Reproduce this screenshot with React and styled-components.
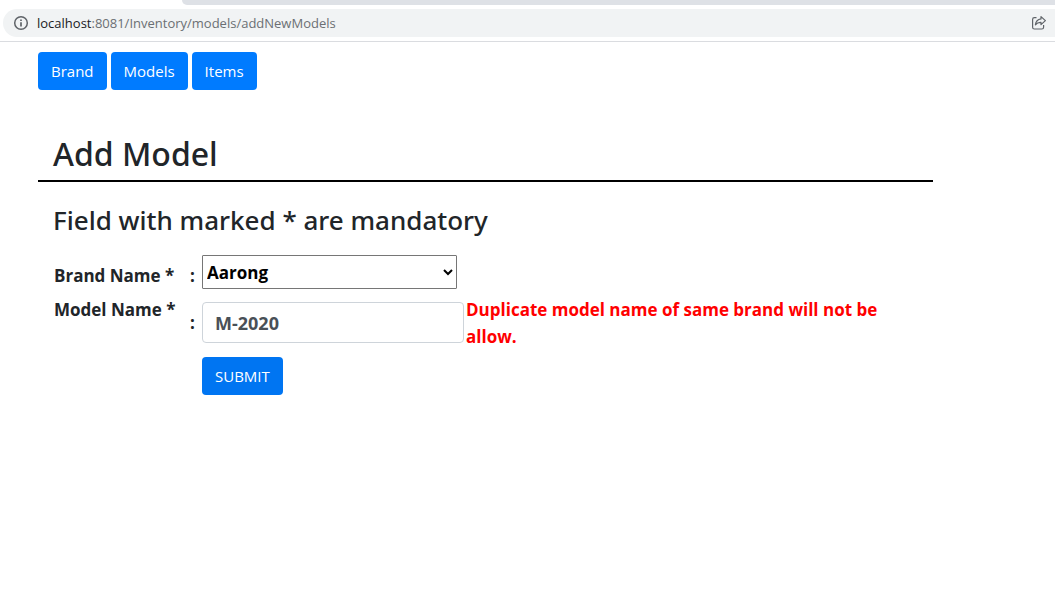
import React from "react";
import styled, { createGlobalStyle } from "styled-components";

const GlobalStyle = createGlobalStyle`
  *, *::before, *::after { box-sizing: border-box; }
  body {
    margin: 0;
    background: #fff;
    color: #212529;
    font-family: "Segoe UI", "Open Sans", "Noto Sans", sans-serif;
    font-size: 15px;
    line-height: 24px;
  }
`;

const BrowserBar = styled.header`
  border-bottom: 1px solid #dadce0;
`;

const TabStrip = styled.div`
  height: 5px;
  margin-left: 182px;
  background: #dee1e6;
  border-bottom-left-radius: 8px;
`;

const AddressBar = styled.div`
  display: flex;
  align-items: center;
  gap: 8px;
  height: 28px;
  margin: 4px 0 4px 3px;
  padding: 0 8px 0 10px;
  border-radius: 14px 0 0 14px;
  background: #f1f3f4;
  color: #5f6368;
`;

const Url = styled.span`
  flex: 1;
  font-size: 13px;
  line-height: 20px;
  color: #6b6f73;
`;

const Host = styled.span`
  color: #202124;
`;

const Page = styled.div`
  padding: 10px 122px 24px 38px;
`;

const Nav = styled.nav`
  display: flex;
  gap: 4px;
`;

const Button = styled.button`
  height: 38px;
  padding: 0 13px;
  border: 0;
  border-radius: 4px;
  background: ${(p) => (p.$active ? "#0075f2" : "#007bff")};
  color: #fff;
  font: inherit;
  cursor: pointer;
`;

const Title = styled.h1`
  margin: 44px 0 0;
  padding: 0 15px 6px;
  border-bottom: 2px solid #000;
  font-family: "Segoe UI", "Noto Sans", sans-serif;
  font-size: 32px;
  line-height: 40px;
  font-weight: 500;
`;

const Subtitle = styled.h2`
  margin: 20px 0 17px;
  padding: 0 15px;
  font-family: "Segoe UI", "Noto Sans", sans-serif;
  font-size: 26px;
  line-height: 36px;
  font-weight: 500;
`;

const Form = styled.form`
  display: grid;
  grid-template-columns: 136px 12px 262px 1fr;
  row-gap: 7px;
  padding: 0 16px;
  font-size: 17px;
  line-height: 27px;
  font-weight: 700;
`;

const Label = styled.label`
  align-self: ${(p) => (p.$top ? "start" : "end")};
`;

const Colon = styled.span`
  align-self: ${(p) => (p.$top ? "start" : "end")};
  padding-top: ${(p) => (p.$top ? "13px" : "0")};
`;

const Select = styled.select`
  grid-column: 3 / 5;
  width: 255px;
  height: 34px;
  border: 1px solid #767676;
  border-radius: 1px;
  background: #fff;
  color: #000;
  font: inherit;
`;

const TextInput = styled.input`
  width: 100%;
  height: 41px;
  margin-top: 6px;
  padding: 0 12px;
  border: 1px solid #ced4da;
  border-radius: 4px;
  color: #495057;
  font: inherit;
  font-size: 18px;
`;

const ErrorText = styled.p`
  margin: 0;
  padding-left: 2px;
  color: #f00;
`;

const Actions = styled.div`
  grid-column: 3 / 5;
  font-size: 15px;
  line-height: 24px;
  font-weight: 400;
`;

const InfoIcon = () => (
  <svg width="16" height="16" viewBox="0 0 16 16" fill="none" aria-hidden="true">
    <circle cx="8" cy="8" r="6.3" stroke="currentColor" strokeWidth="1.5" />
    <path d="M8 7.2v4.2M8 4.4v1.7" stroke="currentColor" strokeWidth="1.7" />
  </svg>
);

const ShareIcon = () => (
  <svg width="16" height="16" viewBox="0 0 16 16" fill="none" stroke="currentColor" strokeWidth="1.2" strokeLinejoin="round" aria-hidden="true">
    <path d="M5.5 2.6H3.4Q1.6 2.6 1.6 4.4v7.8q0 1.8 1.8 1.8h7.4q1.8 0 1.8-1.8V10" />
    <path d="M10 1.6 14.4 5.6 10 9.6V7.4Q6.4 7.2 4.4 9.8 5 4.6 10 3.9Z" />
  </svg>
);

export default function App() {
  return (
    <>
      <GlobalStyle />
      <BrowserBar>
        <TabStrip />
        <AddressBar>
          <InfoIcon />
          <Url>
            <Host>localhost</Host>:8081/Inventory/models/addNewModels
          </Url>
          <ShareIcon />
        </AddressBar>
      </BrowserBar>
      <Page>
        <Nav>
          <Button type="button">Brand</Button>
          <Button type="button">Models</Button>
          <Button type="button">Items</Button>
        </Nav>
        <main>
          <Title>Add Model</Title>
          <Subtitle>Field with marked * are mandatory</Subtitle>
          <Form onSubmit={(e) => e.preventDefault()}>
            <Label htmlFor="brand">Brand Name *</Label>
            <Colon>:</Colon>
            <Select id="brand" defaultValue="Aarong">
              <option>Aarong</option>
            </Select>
            <Label htmlFor="model" $top>Model Name *</Label>
            <Colon $top>:</Colon>
            <TextInput id="model" type="text" defaultValue="M-2020" aria-describedby="model-error" />
            <ErrorText id="model-error">
              Duplicate model name of same brand will not be allow.
            </ErrorText>
            <Actions>
              <Button type="submit" $active>SUBMIT</Button>
            </Actions>
          </Form>
        </main>
      </Page>
    </>
  );
}
